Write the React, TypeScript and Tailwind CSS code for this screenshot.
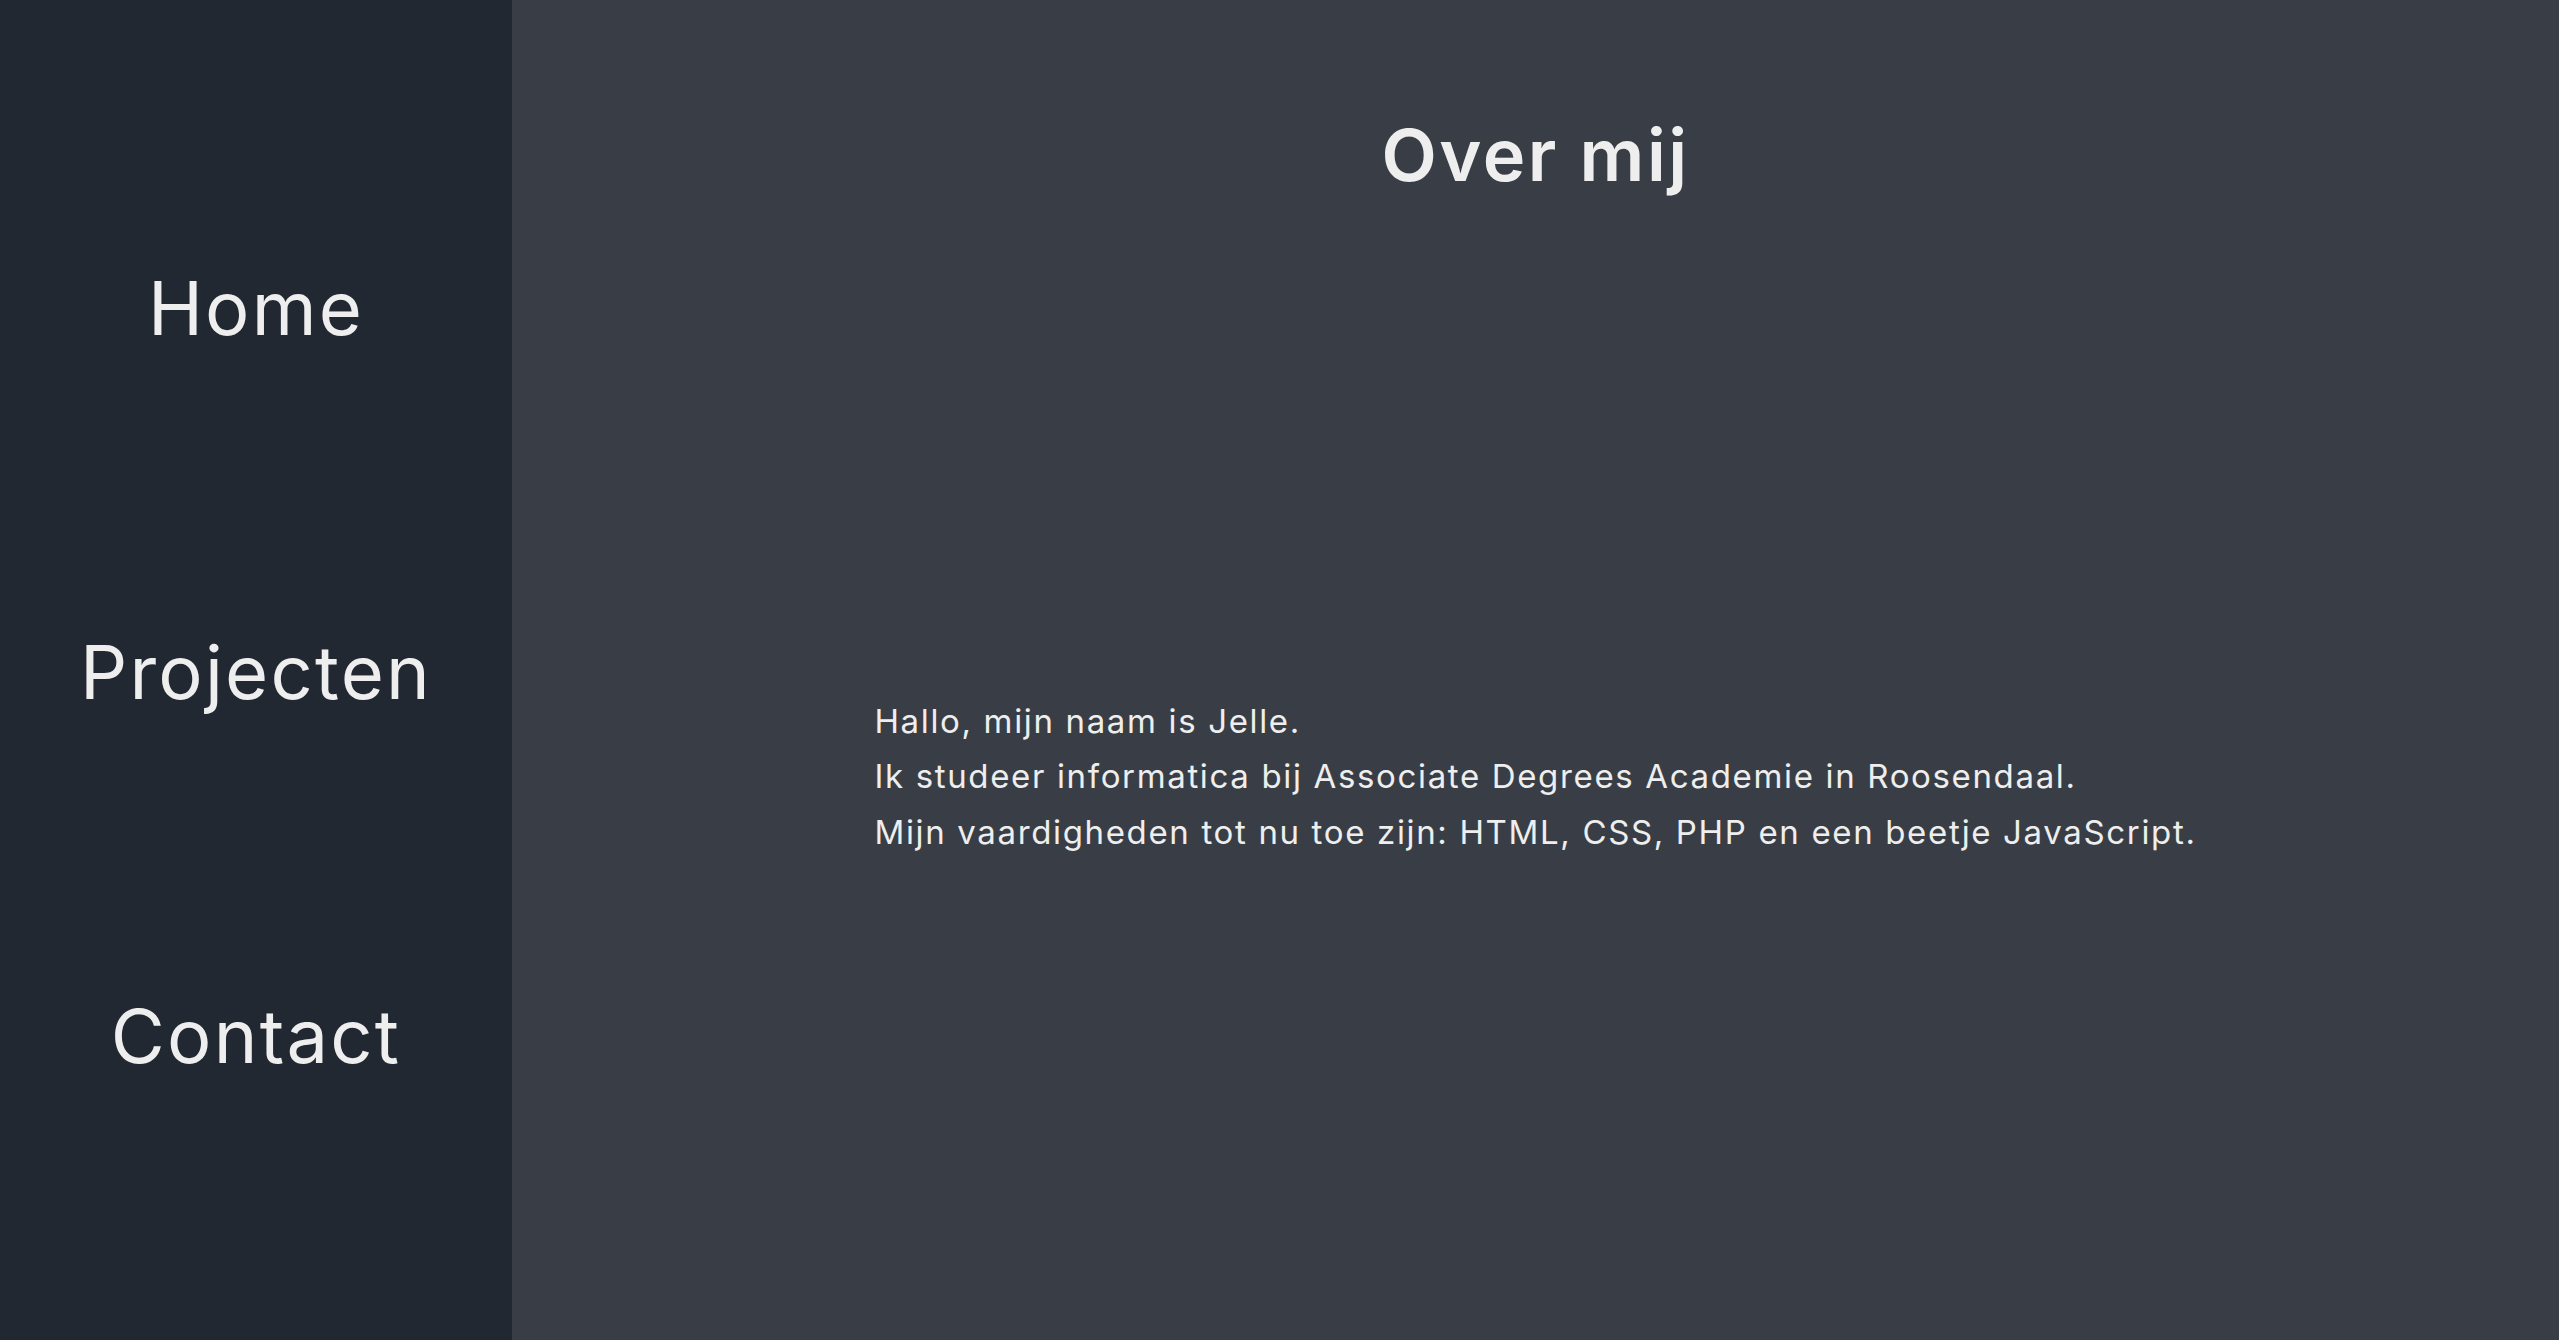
import React from 'react';

const links = ['Home', 'Projecten', 'Contact'];

const App = () => {
	return (
		<div className="flex h-[1340px] w-full font-['Inter',sans-serif] text-[#eeeeee]">
			<nav className="flex w-[512px] shrink-0 flex-col items-center justify-center gap-[290px] bg-[#222831] pt-1">
				{links.map((link) => (
					<a key={link} href="#" className="block text-[74px] leading-none font-normal tracking-[0.03em]">
						{link}
					</a>
				))}
			</nav>
			<main className="flex flex-1 flex-col bg-[#393e46]">
				<h1 className="mt-[119px] mb-[23px] text-center text-[72px] leading-none font-semibold tracking-[0.035em]">
					Over mij
				</h1>
				<div className="flex flex-1 items-center justify-center">
					<p className="text-[33px] leading-[55.5px] tracking-[0.05em]">
						Hallo, mijn naam is Jelle.
						<br />
						Ik studeer informatica bij Associate Degrees Academie in Roosendaal.
						<br />
						Mijn vaardigheden tot nu toe zijn: HTML, CSS, PHP en een beetje JavaScript.
					</p>
				</div>
			</main>
		</div>
	);
};

export default App;
